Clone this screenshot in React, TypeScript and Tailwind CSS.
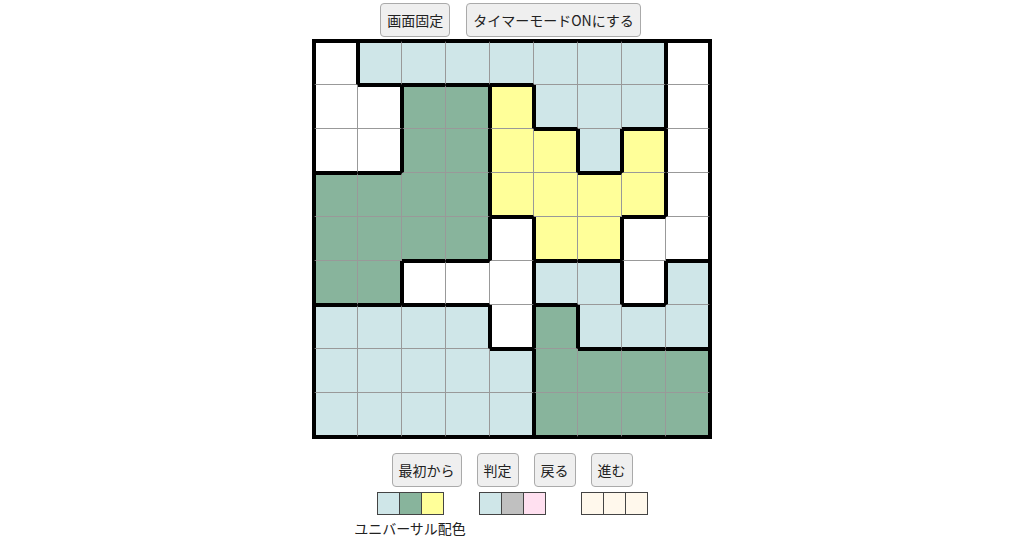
import React from "react";

const rows = [
  "WBBBBBBBW",
  "WWGGYBBBW",
  "WWGGYYBYW",
  "GGGGYYYYW",
  "GGGGWYYWW",
  "GGWWWBBWB",
  "BBBBWGBBB",
  "BBBBBGGGG",
  "BBBBBGGGG",
];

const bgOf = (ch: string) =>
  ch === "B"
    ? "bg-[#cfe6e8]"
    : ch === "G"
    ? "bg-[#88b49c]"
    : ch === "Y"
    ? "bg-[#ffff99]"
    : "bg-white";

function Cell({ r, c }: { r: number; c: number }) {
  const v = rows[r][c];
  const topThick = r === 0 || rows[r - 1][c] !== v;
  const leftThick = c === 0 || rows[r][c - 1] !== v;
  const rightThick = c === 8 || rows[r][c + 1] !== v;
  const bottomThick = r === 8 || rows[r + 1][c] !== v;
  const cls = [
    "w-[44px] h-[44px]",
    bgOf(v),
    topThick ? "border-t-2 border-t-black" : "border-t-0",
    leftThick ? "border-l-2 border-l-black" : "border-l-0",
    rightThick ? "border-r-2 border-r-black" : "border-r border-r-[#999999]",
    bottomThick ? "border-b-2 border-b-black" : "border-b border-b-[#999999]",
  ].join(" ");
  return <div className={cls} />;
}

function Btn({ children }: { children: React.ReactNode }) {
  return (
    <button className="h-[34px] px-[6px] bg-[#efefef] border border-[#aaaaaa] rounded-[4px] text-[14px] leading-[20px] text-[#222222] whitespace-nowrap">
      {children}
    </button>
  );
}

function Strip({ colors }: { colors: string[] }) {
  return (
    <div className="flex border-l border-l-[#444444]">
      {colors.map((c, i) => (
        <div
          key={i}
          className={`w-[22px] h-[23px] border-y border-r border-[#444444] ${c}`}
        />
      ))}
    </div>
  );
}

export default function App() {
  return (
    <div className="w-[1024px] h-[538px] bg-white overflow-hidden flex flex-col items-center pt-[3px] font-['Noto_Sans_CJK_JP',sans-serif] text-[#222222]">
      <div className="flex gap-[16px] h-[34px] -ml-[3px]">
        <Btn>画面固定</Btn>
        <Btn>タイマーモードONにする</Btn>
      </div>
      <div className="mt-[2px] border-2 border-black grid grid-cols-[repeat(9,44px)]">
        {rows.map((row, r) =>
          row.split("").map((_, c) => <Cell key={`${r}-${c}`} r={r} c={c} />)
        )}
      </div>
      <div className="mt-[14px] flex gap-[15px] h-[34px]">
        <Btn>最初から</Btn>
        <Btn>判定</Btn>
        <Btn>戻る</Btn>
        <Btn>進む</Btn>
      </div>
      <div className="mt-[5px] flex items-start gap-[35px]">
        <div className="w-[67px] flex flex-col items-center">
          <Strip colors={["bg-[#cfe6e8]", "bg-[#88b49c]", "bg-[#ffff99]"]} />
          <span className="mt-[3px] whitespace-nowrap text-[14px] leading-[20px]">
            ユニバーサル配色
          </span>
        </div>
        <Strip colors={["bg-[#cfe6e8]", "bg-[#c0c0c0]", "bg-[#ffe0f0]"]} />
        <Strip colors={["bg-[#fff8ec]", "bg-[#fff8ec]", "bg-[#fff8ec]"]} />
      </div>
    </div>
  );
}
